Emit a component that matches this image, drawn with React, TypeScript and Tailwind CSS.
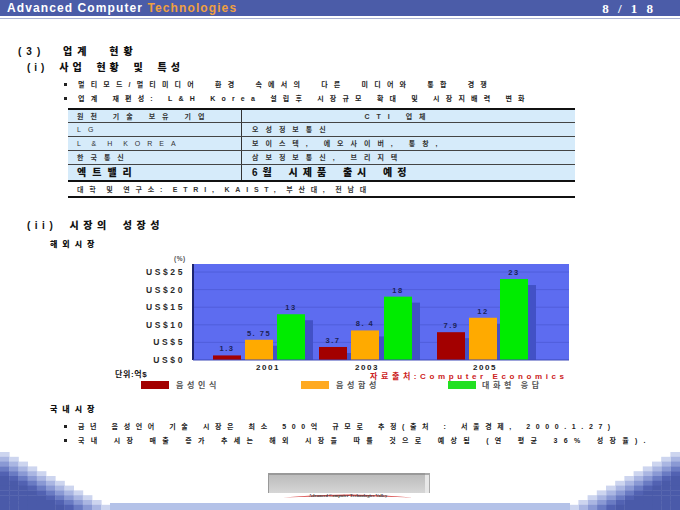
import React from 'react';

const FONT = "font-['Liberation_Sans','Noto_Sans_CJK_KR',sans-serif]";

function Stairs({ flip }: { flip?: boolean }) {
  const cols = 12;
  const cw = 9.2;
  const rh = 4.8;
  const rows = 12;
  const palette = ['#cdd5ef', '#aab6e2', '#8a99d4', '#6a7bc3', '#5262b2', '#4a5aa9'];
  const cells: React.ReactNode[] = [];
  for (let i = 0; i < cols; i++) {
    for (let r = i; r < rows; r++) {
      const d = Math.min(r - i, palette.length - 1);
      cells.push(
        <rect key={`${i}-${r}`} x={i * cw} y={r * rh} width={cw + 0.4} height={rh + 0.4} fill={palette[d]} />
      );
    }
  }
  return (
    <svg width={110} height={58} viewBox="0 0 110 58" className="block shrink-0">
      <g transform={flip ? 'translate(110,0) scale(-1,1)' : undefined}>{cells}</g>
    </svg>
  );
}

type Bar = { x: number; v: number; c: string; l: string };

function Chart() {
  const S = 3.52;
  const base = 108;
  const bars: Bar[] = [
    { x: 213, v: 1.3, c: '#a30000', l: '1.3' },
    { x: 245, v: 5.75, c: '#ffaa00', l: '5. 75' },
    { x: 277, v: 13, c: '#00ec00', l: '13' },
    { x: 319, v: 3.7, c: '#a30000', l: '3.7' },
    { x: 351, v: 8.4, c: '#ffaa00', l: '8. 4' },
    { x: 384, v: 18, c: '#00ec00', l: '18' },
    { x: 437, v: 7.9, c: '#a30000', l: '7.9' },
    { x: 469, v: 12, c: '#ffaa00', l: '12' },
    { x: 500, v: 23, c: '#00ec00', l: '23' },
  ];
  const ticks = ['US$25', 'US$20', 'US$15', 'US$10', 'US$5', 'US$0'];
  const lab = { fontFamily: 'Liberation Sans, sans-serif', fontWeight: 700 } as const;
  const kor = { fontFamily: 'Liberation Sans, Noto Sans CJK KR, sans-serif', fontWeight: 700 } as const;
  return (
    <svg width={680} height={140} viewBox="0 0 680 140" className="block shrink-0">
      <text x={174} y={9} fontSize={6.5} fill="#555" style={lab} letterSpacing={0.5}>(%)</text>
      <rect x={193} y={12} width={376} height={96} fill="#5d6cf0" />
      {[0, 1, 2, 3, 4].map((k) => (
        <line key={k} x1={193} x2={569} y1={20 + k * 17.6} y2={20 + k * 17.6} stroke="#4d5bd6" strokeWidth={0.8} />
      ))}
      {ticks.map((t, k) => (
        <text key={t} x={185} y={23 + k * 17.6} fontSize={8.5} fill="#2a2a2a" textAnchor="end" letterSpacing={2.6} style={lab}>
          {t}
        </text>
      ))}
      {bars.map((b, i) => {
        const h = b.v * S;
        const top = base - h;
        return (
          <g key={i}>
            <rect x={b.x + 28} y={Math.min(top + 6, base - 1)} width={8} height={Math.max(base - top - 6, 1)} fill="#4251c6" />
            <rect x={b.x} y={top} width={28} height={h} fill={b.c} />
            <text x={b.x + 14} y={top - 4} fontSize={7.5} fill="#1b2258" textAnchor="middle" letterSpacing={1.5} style={lab}>
              {b.l}
            </text>
          </g>
        );
      })}
      <line x1={193} x2={193} y1={12} y2={108} stroke="#1c2470" strokeWidth={2} />
      <line x1={193} x2={569} y1={108} y2={108} stroke="#3c48b8" strokeWidth={1} />
      {[
        { x: 268, t: '2001' },
        { x: 367, t: '2003' },
        { x: 485, t: '2005' },
      ].map((y) => (
        <text key={y.t} x={y.x} y={117.5} fontSize={8} fill="#222" textAnchor="middle" letterSpacing={1.6} style={lab}>
          {y.t}
        </text>
      ))}
      <text x={115} y={125} fontSize={8} fill="#111" letterSpacing={0.6} style={kor}>단위:억$</text>
      <text x={370} y={126.5} fontSize={8} fill="#cc2222" letterSpacing={3.6} style={kor}>자료출처:Computer Economics</text>
      <rect x={141} y={129} width={28} height={8} fill="#a30000" />
      <text x={176} y={136} fontSize={8} fill="#555" letterSpacing={3.6} style={kor}>음성인식</text>
      <rect x={301} y={129} width={28} height={8} fill="#ffaa22" />
      <text x={336} y={136} fontSize={8} fill="#555" letterSpacing={3.6} style={kor}>음성합성</text>
      <rect x={448} y={129} width={28} height={8} fill="#22e022" />
      <text x={482} y={136} fontSize={8} fill="#555" letterSpacing={3.6} style={kor}>대화형 응답</text>
    </svg>
  );
}

function Bullet({ children, text }: { children: React.ReactNode; text: string }) {
  return (
    <div className="flex h-[14px] items-center pl-[64px]">
      <span className="mr-[11px] h-[3px] w-[3px] bg-[#222]" />
      <span className={`whitespace-nowrap text-[7px] font-bold leading-none text-[#222] ${text}`}>{children}</span>
    </div>
  );
}

function Cell({ children, className = '' }: { children: React.ReactNode; className?: string }) {
  return (
    <div className={`flex items-center whitespace-nowrap text-[7px] font-bold leading-none text-[#333] ${className}`}>
      {children}
    </div>
  );
}

export default function App() {
  return (
    <div className={`${FONT} flex h-[510px] w-[680px] flex-col overflow-hidden bg-white`}>
      <div className="flex h-[16px] shrink-0 items-center justify-between bg-[#4b5ca8] pl-[7px] pr-[24px]">
        <span className="whitespace-nowrap text-[12px] font-bold leading-none tracking-[1.1px] text-white">
          Advanced Computer <span className="text-[#f0a040]">Technologies</span>
        </span>
        <span className="whitespace-nowrap font-['Liberation_Serif',serif] text-[13px] font-bold leading-none tracking-[3px] text-white">
          8 / 1 8
        </span>
      </div>
      <div className="mt-[2px] h-[1px] shrink-0 bg-[#aab2d2]" />

      <div className="mt-[25px] flex h-[16px] items-center pl-[18px] text-[10px] font-black leading-none tracking-[5px] text-[#111] [word-spacing:10px]">
        (3) 업계 현황
      </div>
      <div className="flex h-[16px] items-center pl-[27px] text-[10px] font-black leading-none tracking-[4px] text-[#111] [word-spacing:4px]">
        (i) 사업 현황 및 특성
      </div>
      <div className="mt-[1px]">
        <Bullet text="tracking-[6.2px] [word-spacing:7px]">멀티모드/멀티미디어 환경 속에서의 다른 미디어와 통합 경쟁</Bullet>
        <Bullet text="tracking-[6.2px] [word-spacing:1px]">업계 재편성: L&amp;H Korea 설립후 시장규모 확대 및 시장지배력 변화</Bullet>
      </div>

      <div className="ml-[68px] mt-[3px] w-[507px] border-t-2 border-b-2 border-[#111]">
        <div className="flex h-[13px] border-b border-[#444] bg-[#d6ebfa]">
          <Cell className="w-[174px] border-r border-[#333] pl-[9px] tracking-[7px] text-[#111]">원천 기술 보유 기업</Cell>
          <Cell className="flex-1 justify-center pr-[20px] tracking-[7px] text-[#111]">CTI 업체</Cell>
        </div>
        <div className="flex h-[14px] border-b border-[#444] bg-[#d6ebfa]">
          <Cell className="w-[174px] border-r border-[#333] pl-[9px] font-normal tracking-[7px]">LG</Cell>
          <Cell className="flex-1 pl-[10px] tracking-[7px]">오성정보통신</Cell>
        </div>
        <div className="flex h-[14px] border-b border-[#444] bg-[#d6ebfa]">
          <Cell className="w-[174px] border-r border-[#333] pl-[9px] font-normal tracking-[7px] [word-spacing:-5px]">L &amp; H KOREA</Cell>
          <Cell className="flex-1 pl-[10px] tracking-[7px]">보이스텍, 에오사이버, 통창,</Cell>
        </div>
        <div className="flex h-[14px] border-b border-[#444] bg-[#d6ebfa]">
          <Cell className="w-[174px] border-r border-[#333] pl-[9px] tracking-[7px]">한국통신</Cell>
          <Cell className="flex-1 pl-[10px] tracking-[7px]">삼보정보통신, 브리지텍</Cell>
        </div>
        <div className="flex h-[17px] border-b-2 border-[#111] bg-[#d6ebfa]">
          <div className="flex w-[174px] items-center whitespace-nowrap border-r border-[#333] pl-[9px] text-[10px] font-black leading-none tracking-[6px] text-[#111]">
            엑트밸리
          </div>
          <div className="flex flex-1 items-center whitespace-nowrap pl-[10px] text-[10px] font-black leading-none tracking-[5px] text-[#111] [word-spacing:4px]">
            6월 시제품 출시 예정
          </div>
        </div>
        <Cell className="h-[14px] pl-[9px] tracking-[5.8px] [word-spacing:-3px]">대학 및 연구소: ETRI, KAIST, 부산대, 전남대</Cell>
      </div>

      <div className="mt-[20px] flex h-[16px] items-center pl-[27px] text-[10px] font-black leading-none tracking-[4.5px] text-[#111] [word-spacing:5px]">
        (ii) 시장의 성장성
      </div>
      <div className="mt-[4px] flex h-[14px] items-center pl-[50px] text-[8px] font-black leading-none tracking-[5px] text-[#111]">
        해외시장
      </div>
      <Chart />
      <div className="mt-[11px] flex h-[14px] items-center pl-[50px] text-[8px] font-black leading-none tracking-[5px] text-[#111]">
        국내시장
      </div>
      <div className="mt-[2px]">
        <Bullet text="tracking-[5.6px] [word-spacing:2px]">금년 음성언어 기술 시장은 최소 500억 규모로 추정(출처 : 서울경제, 2000.1.27)</Bullet>
        <Bullet text="tracking-[6.3px] [word-spacing:2px]">국내 시장 매출 증가 추세는 해외 시장을 따를 것으로 예상됨 (연 평균 36% 성장율).</Bullet>
      </div>

      <div className="mt-auto flex h-[58px] shrink-0">
        <Stairs />
        <div className="flex flex-1 flex-col">
          <div className="ml-[158px] mt-[21px] flex h-[20px] w-[162px]">
            <div className="h-full flex-1 border-l border-t-2 border-[#999] bg-gradient-to-b from-[#bcbcbc] to-[#d6d6d6]" />
            <div className="h-full w-[5px] border-r border-t-2 border-[#aaa] bg-[#e8e8e8]" />
          </div>
          <div className="relative ml-[173px] flex h-[7px] w-[130px] items-center justify-center">
            <svg width={130} height={7} viewBox="0 0 130 7" className="absolute left-0 top-0">
              <path d="M0,4.5 Q65,-1.5 130,4.5 Q65,1.5 0,4.5 Z" fill="#d84848" />
            </svg>
            <span className="relative whitespace-nowrap font-['Liberation_Serif',serif] text-[4.5px] font-bold leading-none text-[#444]">
              Advanced Computer Technologies Valley
            </span>
          </div>
          <div className="mt-auto h-[7px] bg-[#b4c2e8]" />
        </div>
        <Stairs flip />
      </div>
    </div>
  );
}
